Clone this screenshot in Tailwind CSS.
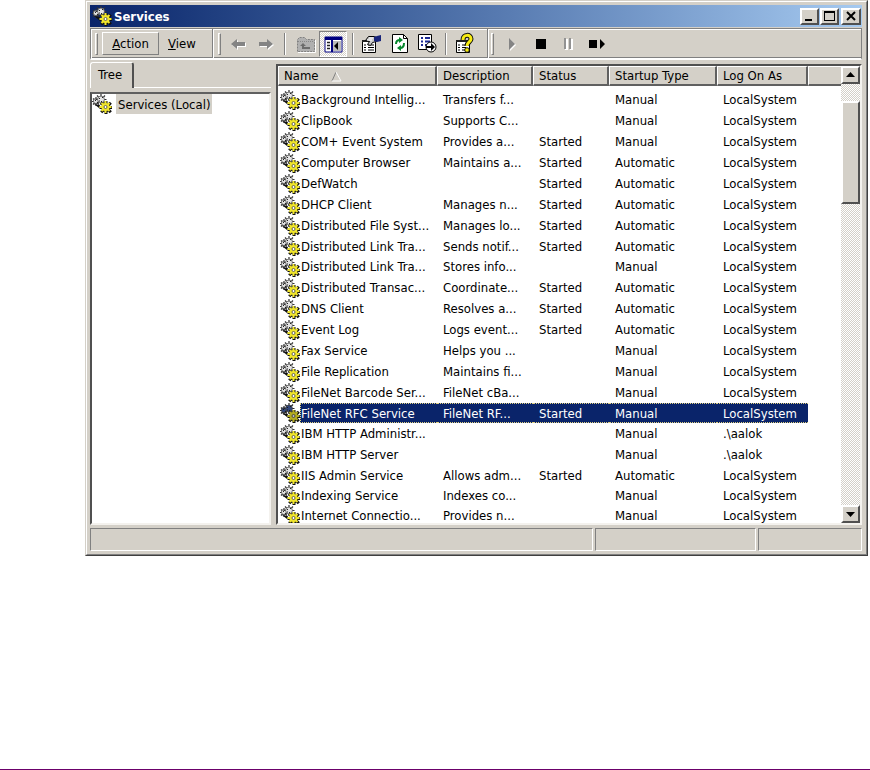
<!DOCTYPE html>
<html lang="en">
<head>
<meta charset="utf-8">
<title>Services</title>
<script src="https://cdn.jsdelivr.net/npm/@tailwindcss/browser@4"></script>
</head>
<body class="bg-white min-h-screen flex flex-col justify-between text-black text-[13px] leading-[15px] font-['DejaVu_Sans_Condensed','DejaVu_Sans',sans-serif]">
<svg class="hidden" aria-hidden="true">
  <symbol id="gears" viewBox="0 0 20 20">
    <path d="M4 3v9M0 7.500h8M1 4.500l6 6M7 4.500l-6 6" stroke="#333" stroke-width="1.200"/>
    <circle cx="4" cy="7" r="2.600" fill="currentColor" stroke="#555" stroke-width=".8"/>
    <path d="M9 0v11M3.500 5.500h11M5 1.500l8 8M13 1.500l-8 8" stroke="#333" stroke-width="1.200"/>
    <circle cx="9" cy="5.500" r="3.400" fill="currentColor" stroke="#555" stroke-width=".8"/>
    <path d="M7 4h1v1H7zM10 3h1v1h-1zM9 7h1v1H9zM3 6h1v1H3zM5 8h1v1H5zM7 6.500h1v1H7z" fill="#222"/>
    <path d="M2 10l5 4 1-3z" fill="#111"/>
    <path d="M14 7v13M7.500 13.500h13M9.200 8.700l9.600 9.600M18.800 8.700l-9.600 9.600" stroke="#111" stroke-width="3"/>
    <circle cx="14" cy="13.500" r="4.500" fill="#111"/>
    <path d="M13.500 7v12M7.500 13h12M9.500 9l8 8M17.500 9l-8 8" stroke="#f0e52c" stroke-width="2"/>
    <circle cx="13.500" cy="13" r="4" fill="#f0e52c"/>
    <circle cx="13.500" cy="13" r="1.500" fill="#fff" stroke="#444" stroke-width=".8"/>
  </symbol>
</svg>

<main class="ml-[85px] mr-[2px] bg-[#d4d0c8] border border-t-[#d4d0c8] border-l-[#d4d0c8] border-r-[#404040] border-b-[#404040]">
 <div class="border border-t-white border-l-white border-r-[#808080] border-b-[#808080] p-[3px] pr-1">
  <header class="h-[22px] flex items-center bg-linear-to-r from-[#0a246a] to-[#a6caf0] pl-[2px] pr-px">
    <svg class="w-5 h-5 shrink-0 text-[#e4e4e4]"><use href="#gears"/></svg>
    <h1 class="ml-[2px] grow text-white font-bold">Services</h1>
    <button aria-label="Minimize" class="w-[19px] h-[17px] bg-[#d4d0c8] border-2 border-t-white border-l-white border-r-[#505050] border-b-[#505050]"><svg class="w-[15px] h-[13px]"><path d="M3 9h7v2H3z"/></svg></button>
    <button aria-label="Maximize" class="w-[19px] h-[17px] ml-px bg-[#d4d0c8] border-2 border-t-white border-l-white border-r-[#505050] border-b-[#505050]"><svg class="w-[15px] h-[13px]"><path d="M2 1h11v10H2zM3 3v7h9V3z" fill-rule="evenodd"/></svg></button>
    <button aria-label="Close" class="w-[20px] h-[17px] ml-[2px] bg-[#d4d0c8] border-2 border-t-white border-l-white border-r-[#505050] border-b-[#505050]"><svg class="w-4 h-[13px]"><path d="M4 2l8 8M12 2l-8 8" stroke="#000" stroke-width="2"/></svg></button>
  </header>

  <nav class="mt-px flex h-8 border border-[#808080] border-b-2 border-b-white shadow-[inset_1px_1px_#fff,inset_0_-1px_#808080]">
    <div class="w-[122px] flex items-center border-r border-[#808080] pl-1">
      <i class="w-[3px] h-[22px] border border-t-white border-l-white border-r-[#808080] border-b-[#808080]"></i>
      <button class="ml-1 w-[57px] h-[23px] border border-t-white border-l-white border-r-[#808080] border-b-[#808080]"><u>A</u>ction</button>
      <button class="ml-[9px]"><u>V</u>iew</button>
    </div>
    <div class="w-[275px] flex items-center border-l border-l-white border-r border-r-[#808080] pl-1">
      <i class="w-[3px] h-[22px] border border-t-white border-l-white border-r-[#808080] border-b-[#808080]"></i>
      <button aria-label="Back" class="ml-[7px]"><svg class="w-5 h-5"><path d="M10 6l-6 5 6 5v-3h8V9h-8z" fill="#fff"/><path d="M9 5l-6 5 6 5v-3h8V8H9z" fill="#848484"/></svg></button>
      <button aria-label="Forward" class="ml-2"><svg class="w-5 h-5"><path d="M12 6l6 5-6 5v-3H4V9h8z" fill="#fff"/><path d="M11 5l6 5-6 5v-3H3V8h8z" fill="#848484"/></svg></button>
      <i class="ml-2 w-[2px] h-[22px] border-l border-l-[#808080] border-r border-r-white"></i>
      <button aria-label="Up one level" class="ml-2"><svg class="w-6 h-6"><path d="M3.500 19.500v-12l2-2h5l2 2h8v12z" fill="#b0b0b0" stroke="#808080" stroke-dasharray="2 1"/><path d="M4 9.500h16" stroke="#888" stroke-dasharray="1 1"/><path d="M9 11l-3 3h2v3h8v-2h-6v-1h2z" fill="#6c6c6c"/><path d="M4 20.500h17.500V8" stroke="#fff" fill="none"/></svg></button>
      <button aria-label="Show or hide tree" class="ml-px w-[28px] h-[26px] border border-t-[#808080] border-l-[#808080] border-r-white border-b-white bg-[repeating-conic-gradient(#fff_0_25%,#d4d0c8_0_50%)] bg-size-[2px_2px] pl-px"><svg class="w-6 h-6"><path d="M4 5h17v15H4z" fill="#fff" stroke="#000080" stroke-width="1"/><path d="M4 5h17v3H4z" fill="#000080"/><path d="M11 8v12" stroke="#000080" stroke-width="2"/><path d="M6 10.500h3M6 13.500h3M6 16.500h3" stroke="#222" stroke-width="1.500"/><path d="M12 9h8v10h-8z" fill="#bbb"/><path d="M17 10v8l-4-4z"/></svg></button>
      <i class="ml-[5px] w-[2px] h-[22px] border-l border-l-[#808080] border-r border-r-white"></i>
      <button aria-label="Properties" class="ml-[5px]"><svg class="w-6 h-6"><path d="M3.500 8.500h13v12h-13z" fill="#fff" stroke="#000"/><path d="M3 8h14v2H3z" fill="#222"/><path d="M5 13h2M9 13h6M5 15.500h2M9 15.500h6M5 18h2M9 18h6" stroke="#000"/><path d="M6.500 8.500l3-4h6l2 1v4l-4 1-2 3-3-1 2-3z" fill="#c8c8c8" stroke="#000"/><path d="M8 8h5M10 6h4" stroke="#fff"/><path d="M15 5l3-1 4-1v6l-4 1-3-1z" fill="#18247a"/></svg></button>
      <button aria-label="Refresh" class="ml-[5px]"><svg class="w-6 h-6"><path d="M4.500 2.500h11l4 4v14h-15z" fill="#fff" stroke="#000"/><path d="M15.500 2.500v4h4" fill="none" stroke="#000"/><path d="M8 12c0-3 2-4 4-4M16 11c0 4-2 5-4 5" fill="none" stroke="#07882d" stroke-width="2"/><path d="M11 5v6l4-3zM13 13v6l-4-3z" fill="#07882d"/></svg></button>
      <button aria-label="Export list" class="ml-[3px]"><svg class="w-6 h-6"><path d="M3.500 2.500h13v15h-13z" fill="#fff" stroke="#000"/><path d="M6 6h2M10 6h5M6 9.500h2M10 9.500h5M6 13h2M10 13h2" stroke="#1c2a93" stroke-width="2"/><circle cx="16" cy="15" r="5" fill="#fff" stroke="#000"/><path d="M11 14h5v-3l4 4-4 4v-3h-5z"/></svg></button>
      <i class="ml-[6px] w-[2px] h-[22px] border-l border-l-[#808080] border-r border-r-white"></i>
      <button aria-label="Help" class="ml-[6px]"><svg class="w-6 h-6"><path d="M3.500 8.500h13v12h-13z" fill="#fff" stroke="#000"/><path d="M3 8h13v2H3z" fill="#222"/><path d="M5 13h2M9 13h5M5 15.500h2M9 15.500h4M5 18h2M9 18h4" stroke="#000"/><path d="M10 8c0-6 8-6 8-1 0 3-4 3-4 7" fill="none" stroke="#111" stroke-width="5"/><path d="M10 8c0-6 8-6 8-1 0 3-4 3-4 7" fill="none" stroke="#f8ec12" stroke-width="3"/><circle cx="14" cy="18" r="2.300" fill="#f8ec12" stroke="#111"/></svg></button>
    </div>
    <div class="grow flex items-center border-l border-l-white pl-[2px]">
      <i class="w-[3px] h-[22px] border border-t-white border-l-white border-r-[#808080] border-b-[#808080]"></i>
      <button aria-label="Start service" class="ml-[11px]"><svg class="w-5 h-5"><path d="M5 5l6 6-6 6z" fill="#fff"/><path d="M4 4l6 6-6 6z" fill="#848484"/></svg></button>
      <button aria-label="Stop service" class="ml-[6px]"><svg class="w-5 h-5"><path d="M5 5h10v10H5z"/></svg></button>
      <button aria-label="Pause service" class="ml-2"><svg class="w-5 h-5"><path d="M6 5h3v11H6zM11 5h3v11h-3z" fill="#fff"/><path d="M5 4h2v11H5zM10 4h2v11h-2z" fill="#929292"/></svg></button>
      <button aria-label="Restart service" class="ml-2"><svg class="w-5 h-5"><path d="M2 6h8v8H2zM13 5l5 5-5 5z"/></svg></button>
    </div>
  </nav>

  <div class="mt-[2px] flex h-[463px] items-stretch gap-[5px]">
    <section class="w-[181px] shrink-0 flex flex-col">
      <div class="flex h-[26px] border-b border-white">
        <h2 class="w-[44px] h-[26px] bg-[#d4d0c8] rounded-t-[3px] border-t border-l border-white border-r-2 border-r-[#505050] pl-[7px] pt-1">Tree</h2>
      </div>
      <ul class="mt-1 grow bg-white border-2 border-t-[#606060] border-l-[#505050] border-r-[#f4f2ee] border-b-[#f4f2ee]">
        <li class="flex items-center">
          <svg class="w-5 h-5 shrink-0 text-[#e4e4e4]"><use href="#gears"/></svg>
          <a href="#" class="ml-1 h-[20px] bg-[#d4d0c8] px-[2px] pt-[3px] whitespace-nowrap">Services (Local)</a>
        </li>
      </ul>
    </section>

    <section class="mt-[2px] grow min-w-0 flex bg-white border-2 border-t-[#505050] border-l-[#505050] border-r-[#f4f2ee] border-b-[#f4f2ee]">
      <div class="grow min-w-0 overflow-hidden">
        <table class="w-full table-fixed border-separate border-spacing-0 whitespace-nowrap">
          <colgroup><col class="w-[159px]"><col class="w-[96px]"><col class="w-[76px]"><col class="w-[108px]"><col class="w-[91px]"><col></colgroup>
          <thead>
            <tr id="head"></tr>
            <tr class="h-[3px]"><td colspan="6" class="p-0"></td></tr>
          </thead>
          <tbody id="rows"></tbody>
        </table>
      </div>
      <div class="w-[19px] shrink-0 flex flex-col bg-[repeating-conic-gradient(#fff_0_25%,#d4d0c8_0_50%)] bg-size-[2px_2px]">
        <button aria-label="Scroll up" class="h-[18px] bg-[#d4d0c8] border-2 border-t-white border-l-white border-r-[#505050] border-b-[#505050]"><svg class="w-[15px] h-[14px]"><path d="M3 9h9L7.500 4z"/></svg></button>
        <div class="mt-[17px] h-[103px] bg-[#d4d0c8] border-2 border-t-white border-l-white border-r-[#505050] border-b-[#505050]"></div>
        <button aria-label="Scroll down" class="mt-auto h-[18px] bg-[#d4d0c8] border-2 border-t-white border-l-white border-r-[#505050] border-b-[#505050]"><svg class="w-[15px] h-[14px]"><path d="M3 5h9l-4.500 5z"/></svg></button>
      </div>
    </section>
  </div>

  <footer class="mt-[3px] flex gap-[2px] h-[23px]">
    <div class="grow border border-t-[#808080] border-l-[#808080] border-r-white border-b-white"></div>
    <div class="w-[161px] border border-t-[#808080] border-l-[#808080] border-r-white border-b-white"></div>
    <div class="w-[104px] border border-t-[#808080] border-l-[#808080] border-r-white border-b-white"></div>
  </footer>
 </div>
</main>
<div class="h-px bg-[#6b006b]"></div>

<script>
const heads = ["Name", "Description", "Status", "Startup Type", "Log On As", ""];
const sortMark = '<svg class="inline-block ml-3 w-3 h-3"><path d="M1 10l4-9" stroke="#808080"/><path d="M5 1l5 9H1" fill="none" stroke="#fff"/></svg>';
document.getElementById("head").innerHTML = heads.map((h, i) =>
  `<th class="h-[20px] p-0 pl-[5px] bg-[#d4d0c8] text-left font-normal border-t border-l border-t-white border-l-white ${i < 5 ? "border-r-2" : ""} border-b-2 border-r-[#606060] border-b-[#606060]">${h}${i === 0 ? sortMark : ""}</th>`).join("");
const L = "LocalSystem", S = "Started", M = "Manual", A = "Automatic";
const services = [
  ["Background Intellig...", "Transfers f...", "", M, L],
  ["ClipBook", "Supports C...", "", M, L],
  ["COM+ Event System", "Provides a...", S, M, L],
  ["Computer Browser", "Maintains a...", S, A, L],
  ["DefWatch", "", S, A, L],
  ["DHCP Client", "Manages n...", S, A, L],
  ["Distributed File Syst...", "Manages lo...", S, A, L],
  ["Distributed Link Tra...", "Sends notif...", S, A, L],
  ["Distributed Link Tra...", "Stores info...", "", M, L],
  ["Distributed Transac...", "Coordinate...", S, A, L],
  ["DNS Client", "Resolves a...", S, A, L],
  ["Event Log", "Logs event...", S, A, L],
  ["Fax Service", "Helps you ...", "", M, L],
  ["File Replication", "Maintains fi...", "", M, L],
  ["FileNet Barcode Ser...", "FileNet cBa...", "", M, L],
  ["FileNet RFC Service", "FileNet RF...", S, M, L],
  ["IBM HTTP Administr...", "", "", M, ".\\aalok"],
  ["IBM HTTP Server", "", "", M, ".\\aalok"],
  ["IIS Admin Service", "Allows adm...", S, A, L],
  ["Indexing Service", "Indexes co...", "", M, L],
  ["Internet Connectio...", "Provides n...", "", M, L]
];
const selected = 15;
document.getElementById("rows").innerHTML = services.map((r, i) => {
  const on = i === selected;
  const h = i % 8 === 7 || i > 17 ? "h-[20px]" : "h-[21px]";
  const fill = on ? "bg-[#0a246a] text-white border-y border-dotted border-[#e0d080]" : "";
  const cells = r.slice(1).map(c => `<td class="${h} p-0 pl-[6px] leading-[13px] ${fill}">${c}</td>`).join("");
  const label = on ? "bg-[#0a246a] text-white border-y border-l border-dotted border-[#e0d080] leading-[19px]" : "pl-px leading-[21px]";
  const icon = on ? "text-[#3f5ea8] brightness-75" : "text-[#e4e4e4]";
  return `<tr><td class="${h} p-0"><div class="flex items-center pl-[2px] ${h}"><svg class="w-5 h-5 shrink-0 ${icon}"><use href="#gears"/></svg><span class="grow ${h} ${label}">${r[0]}</span></div></td>${cells}<td class="p-0"></td></tr>`;
}).join("");
</script>
</body>
</html>
